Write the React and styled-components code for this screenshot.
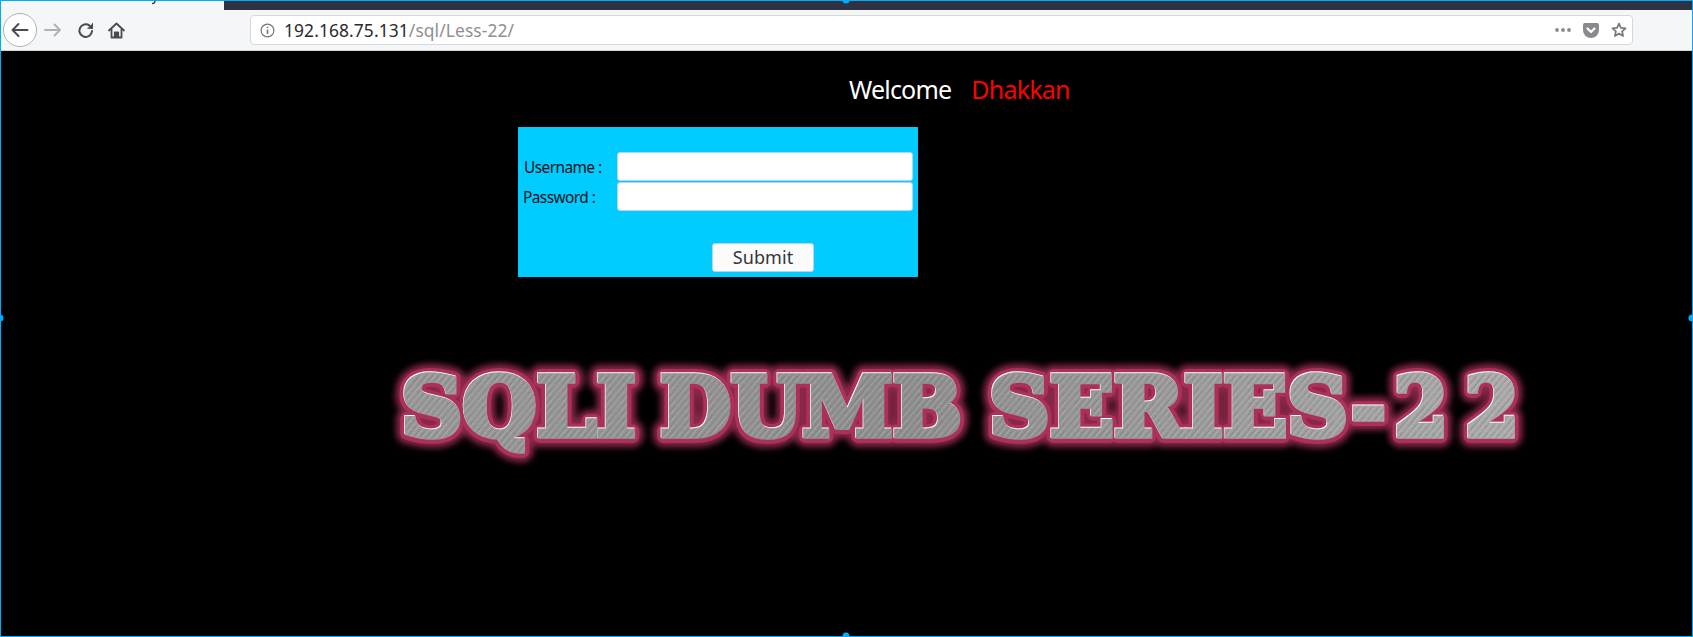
import React from "react";
import styled, { createGlobalStyle } from "styled-components";

const Global = createGlobalStyle`
  html, body { margin: 0; padding: 0; background: #000; overflow: hidden; }
  * { box-sizing: border-box; }
`;
const Frame = styled.div`
  position: relative; width: 1693px; height: 637px; background: #000;
  border: 1px solid #00aaff; font-family: "Noto Sans", sans-serif;
`;
const Handle = styled.span`
  position: absolute; width: 7px; height: 7px; border-radius: 50%; background: #00aaff;
  left: ${p => p.$x}; top: ${p => p.$y}; transform: translate(-50%, -50%);
`;
const TabStrip = styled.div`
  display: flex; height: 9px; background: #2f3240;
`;
const ActiveTab = styled.div`
  width: 223px; background: #f5f6f7; position: relative;
`;
const TabGlyph = styled.svg`
  display: block; margin-left: 150px;
`;
const Toolbar = styled.div`
  height: 41px; background: #f5f6f7; border-bottom: 1px solid #d4d4d6;
  display: flex; align-items: center; padding-left: 2px;
`;
const BackButton = styled.div`
  width: 34px; height: 34px; border-radius: 50%; background: #fff; border: 1px solid #b1b1b3;
  display: flex; align-items: center; justify-content: center; flex: none;
`;
const NavIcon = styled.svg`
  display: block; flex: none; margin-left: ${p => p.$ml}px;
`;
const AddressBar = styled.div`
  margin-left: 125px; width: 1383px; height: 30px; background: #fff; border: 1px solid #d7d8da;
  border-radius: 4px; display: flex; align-items: center; padding-left: 9px; padding-right: 5px;
`;
const Url = styled.div`
  margin-left: 9px; font-size: 17.4px; letter-spacing: 0.1px; color: #8f8f92; white-space: nowrap; flex: 1;
  b { font-weight: 400; color: #2a2a2e; }
`;
const Content = styled.div`
  padding-top: 23px; height: 585px; overflow: hidden;
`;
const WelcomeRow = styled.div`
  margin-left: 848px; display: flex; gap: 20px; height: 30px; line-height: 30px;
  font-size: 25px; letter-spacing: -0.8px; white-space: nowrap;
`;
const Word = styled.span`
  color: ${p => p.$c};
`;
const LoginBox = styled.form`
  margin: 23px 0 0 517px; width: 400px; height: 150px; background: #00ccff; padding: 25px 5px 5px 5px;
  display: flex; flex-direction: column;
`;
const Field = styled.div`
  display: flex; align-items: center; height: 29px; margin-bottom: 1px;
`;
const Label = styled.label`
  width: 94px; flex: none; font-size: 15.4px; letter-spacing: -0.55px; color: #021018; white-space: nowrap;
  padding-left: ${p => p.$pl}px; padding-top: 2px;
`;
const Input = styled.input`
  width: 296px; height: 29px; background: #fff; border: 1px solid #b9d3ee; border-radius: 3px; padding: 0 4px;
`;
const SubmitRow = styled.div`
  margin-top: 31px; padding-left: 189px;
`;
const Submit = styled.button`
  width: 102px; height: 29px; background: #fbfbfb; border: 1px solid #b9d3ee; border-radius: 3px;
  font: 18px "Noto Sans", sans-serif; letter-spacing: 0.1px; color: #33363a; padding: 0; line-height: 27px;
`;
const LogoWrap = styled.div`
  margin: 83px 0 0 385px; width: 1160px; height: 110px;
`;
const LogoSvg = styled.svg`
  display: block; overflow: visible;
  text { font-family: "DejaVu Serif", serif; font-weight: 700; font-size: 83px; }
`;

const words = [
  { t: "SQLI", x: 15, len: 235 },
  { t: "DUMB", x: 274, len: 302 },
  { t: "SERIES-", x: 603, len: 397 },
  { t: "2", x: 1008, len: 54 },
  { t: "2", x: 1079, len: 54 },
];
const LogoText = (props) => (
  <g {...props}>
    {words.map(w => (
      <text key={w.x} x={w.x} y="76" textLength={w.len} lengthAdjust="spacingAndGlyphs">{w.t}</text>
    ))}
  </g>
);

const Logo = () => (
  <LogoSvg width="1160" height="110" viewBox="0 0 1160 110" aria-label="SQLI DUMB SERIES-22">
    <defs>
      <linearGradient id="base" gradientUnits="userSpaceOnUse" x1="0" x2="1160" y1="0" y2="0">
        <stop offset="0" stopColor="#9a9a9a" />
        <stop offset="0.45" stopColor="#8f8f8f" />
        <stop offset="1" stopColor="#aeaeae" />
      </linearGradient>
      <pattern id="brush" width="5" height="5" patternUnits="userSpaceOnUse" patternTransform="rotate(-50)">
        <rect y="0" width="5" height="0.8" fill="#6a6a6a" fillOpacity="0.32" />
        <rect y="2" width="5" height="0.7" fill="#d0d0d0" fillOpacity="0.25" />
        <rect y="3.6" width="2.5" height="0.6" fill="#707070" fillOpacity="0.22" />
      </pattern>
      <filter id="glow" x="-5%" y="-30%" width="110%" height="160%">
        <feGaussianBlur stdDeviation="3" />
      </filter>
    </defs>
    <LogoText fill="#a83058" stroke="#b83660" strokeWidth="22" strokeLinejoin="round" filter="url(#glow)" opacity="0.75" />
    <LogoText fill="#ac3158" stroke="#ac3158" strokeWidth="14" strokeLinejoin="round" />
    <LogoText fill="#ffffff" stroke="#ffffff" strokeWidth="5.5" strokeLinejoin="miter" strokeMiterlimit="3" transform="translate(-0.5,-0.7)" />
    <LogoText fill="url(#base)" stroke="url(#base)" strokeWidth="5.5" strokeLinejoin="miter" strokeMiterlimit="3" transform="translate(0.2,0.2)" />
    <LogoText fill="url(#brush)" stroke="url(#brush)" strokeWidth="5.5" strokeLinejoin="miter" strokeMiterlimit="3" transform="translate(0.2,0.2)" />
  </LogoSvg>
);

export default function App() {
  return (
    <>
      <Global />
      <Frame>
        <TabStrip>
          <ActiveTab>
            <TabGlyph width="6" height="4" viewBox="0 0 6 4">
              <path d="M4 0 C4 2 3 2.6 1 2.6" fill="none" stroke="#333" strokeWidth="1.2" />
            </TabGlyph>
          </ActiveTab>
        </TabStrip>
        <Toolbar>
          <BackButton>
            <svg width="18" height="16" viewBox="0 0 18 16" fill="none" stroke="#4a4a4f" strokeWidth="2" strokeLinecap="round" strokeLinejoin="round">
              <path d="M1.5 8H16.5M7.5 2L1.5 8L7.5 14" />
            </svg>
          </BackButton>
          <NavIcon $ml={7} width="17" height="14" viewBox="0 0 17 14" fill="none" stroke="#b1b1b3" strokeWidth="1.8" strokeLinecap="round" strokeLinejoin="round">
            <path d="M1 7H16M10.5 1.5L16 7L10.5 12.5" />
          </NavIcon>
          <NavIcon $ml={16} width="17" height="17" viewBox="0 0 17 17" fill="none" stroke="#4a4a4f" strokeWidth="2" strokeLinecap="round" strokeLinejoin="round">
            <path d="M15 9A6.3 6.3 0 1 1 12.5 3.6L15 6" />
            <path d="M15.5 1.5V6.3H10.8" fill="#4a4a4f" strokeWidth="1" />
          </NavIcon>
          <NavIcon $ml={14} width="17" height="17" viewBox="0 0 17 17" fill="none" stroke="#4a4a4f" strokeWidth="1.8" strokeLinejoin="round">
            <path d="M1 8.5L8.5 1.5L16 8.5" strokeLinecap="round" />
            <path d="M3.5 7V15.5H13.5V7" />
            <path d="M6.8 15.5V10.5H10.2V15.5" fill="#4a4a4f" />
          </NavIcon>
          <AddressBar>
            <svg width="15" height="15" viewBox="0 0 15 15" fill="none" stroke="#77777b" strokeWidth="1.2">
              <circle cx="7.5" cy="7.5" r="6.4" />
              <path d="M7.5 6.6V11M7.5 3.8V5" strokeWidth="1.6" />
            </svg>
            <Url><b>192.168.75.131</b>/sql/Less-22/</Url>
            <svg width="16" height="4" viewBox="0 0 16 4" fill="#8a8a8e">
              <circle cx="2" cy="2" r="1.9" /><circle cx="8" cy="2" r="1.9" /><circle cx="14" cy="2" r="1.9" />
            </svg>
            <NavIcon $ml={12} width="16" height="15" viewBox="0 0 16 15">
              <path d="M2 0H14A2 2 0 0 1 16 2V7A8 8 0 0 1 0 7V2A2 2 0 0 1 2 0Z" fill="#8a8a8e" />
              <path d="M4.5 5.5L8 9L11.5 5.5" fill="none" stroke="#fff" strokeWidth="2.2" strokeLinecap="round" strokeLinejoin="round" />
            </NavIcon>
            <NavIcon $ml={12} width="16" height="16" viewBox="0 0 16 16" fill="none" stroke="#77777b" strokeWidth="1.7" strokeLinejoin="round">
              <path d="M8 1.6L9.9 5.8L14.6 6.3L11.1 9.4L12.1 14L8 11.6L3.9 14L4.9 9.4L1.4 6.3L6.1 5.8Z" />
            </NavIcon>
          </AddressBar>
        </Toolbar>
        <Content>
          <WelcomeRow>
            <Word $c="#fff">Welcome</Word>
            <Word $c="#ff0000">Dhakkan</Word>
          </WelcomeRow>
          <LoginBox onSubmit={e => e.preventDefault()}>
            <Field>
              <Label $pl={1}>Username :</Label>
              <Input type="text" />
            </Field>
            <Field>
              <Label $pl={0}>Password :</Label>
              <Input type="password" />
            </Field>
            <SubmitRow>
              <Submit type="submit">Submit</Submit>
            </SubmitRow>
          </LoginBox>
          <LogoWrap><Logo /></LogoWrap>
        </Content>
        <Handle $x="845px" $y="-1px" />
        <Handle $x="-1px" $y="317px" />
        <Handle $x="1691px" $y="317px" />
        <Handle $x="845px" $y="635px" />
      </Frame>
    </>
  );
}
